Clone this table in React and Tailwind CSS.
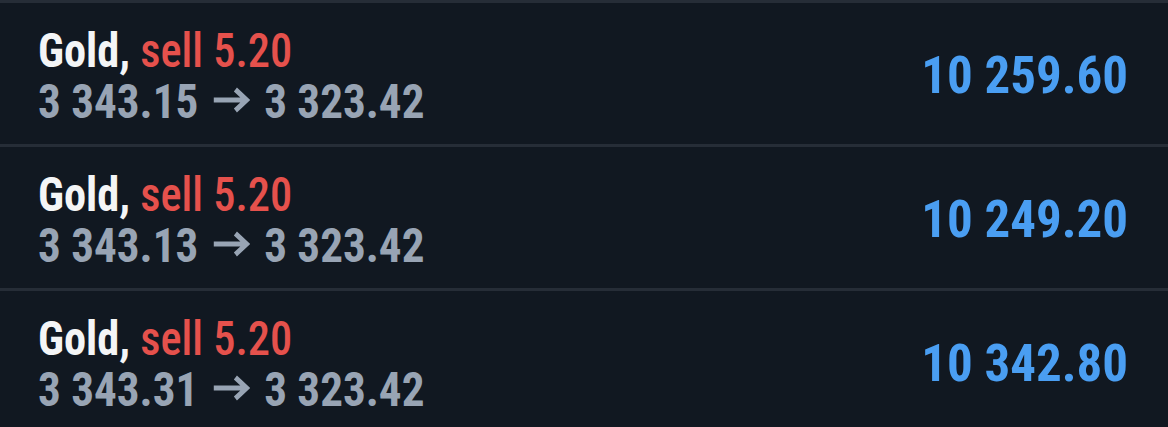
import React from "react";

const trades = [
  { open: "3 343.15", close: "3 323.42", profit: "10 259.60" },
  { open: "3 343.13", close: "3 323.42", profit: "10 249.20" },
  { open: "3 343.31", close: "3 323.42", profit: "10 342.80" },
];

const font = { fontFamily: "'Roboto Condensed', 'Roboto', 'Liberation Sans', sans-serif" };

const Arrow = () => (
  <svg
    width="40"
    height="26"
    viewBox="0 0 40 26"
    className="mx-[15px] inline-block align-[5px]"
    fill="none"
    stroke="currentColor"
    strokeWidth="5"
  >
    <path d="M1 13H36M24 2.5L36 13L24 23.5" />
  </svg>
);

const TradeRow = ({ trade }) => (
  <div className="flex h-[144px] items-center justify-between border-t-[3px] border-[#262d37] pl-[38px] pr-[40px] pt-[4px]">
    <div className="flex flex-col text-[48px] leading-[51px]">
      <div className="origin-left scale-x-[0.925] whitespace-nowrap">
        <span className="font-bold text-[#f4f5f6]">Gold,</span>{" "}
        <span className="font-medium text-[#e5514c]">sell 5.20</span>
      </div>
      <div className="origin-left scale-x-[0.94] whitespace-nowrap font-bold text-[#98a4b4]">
        {trade.open}
        <Arrow />
        {trade.close}
      </div>
    </div>
    <div className="origin-right scale-x-[0.98] whitespace-nowrap text-[52px] leading-[56px] font-bold text-[#4a9ef2]">
      {trade.profit}
    </div>
  </div>
);

export default function App() {
  return (
    <div className="h-[427px] w-[1168px] overflow-hidden bg-[#111821]" style={font}>
      {trades.map((t) => (
        <TradeRow key={t.profit} trade={t} />
      ))}
    </div>
  );
}
